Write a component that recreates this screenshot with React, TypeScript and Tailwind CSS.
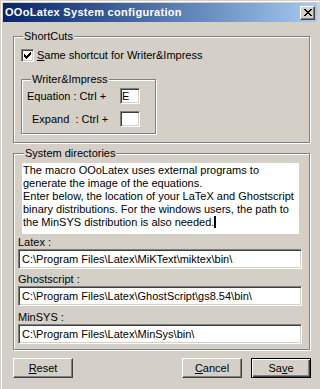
import React from "react";

const sunken =
  "bg-white border border-t-[#808080] border-l-[#808080] border-b-white border-r-white shadow-[inset_1px_1px_0_#404040,inset_-1px_-1px_0_#d4d0c8]";
const raised =
  "border border-t-white border-l-white border-b-[#404040] border-r-[#404040] shadow-[inset_-1px_-1px_0_#808080]";
const raisedDefault =
  "border border-black shadow-[inset_1px_1px_0_#fff,inset_-1px_-1px_0_#404040,inset_-2px_-2px_0_#808080]";
const group =
  "relative border border-[#808080] shadow-[inset_1px_1px_0_#fff,1px_1px_0_#fff]";
const legend =
  "absolute top-[-7px] bg-[#d4d0c8] px-[1px] leading-[13px] whitespace-nowrap";

function CloseGlyph() {
  const rows: [number, number][][] = [
    [[0, 2], [6, 2]],
    [[1, 2], [5, 2]],
    [[2, 4]],
    [[3, 2]],
    [[2, 4]],
    [[1, 2], [5, 2]],
    [[0, 2], [6, 2]],
  ];
  return (
    <svg width="8" height="7" viewBox="0 0 8 7" shapeRendering="crispEdges">
      {rows.map((r, y) =>
        r.map(([x, w], i) => <rect key={`${y}-${i}`} x={x} y={y} width={w} height={1} fill="#000" />)
      )}
    </svg>
  );
}

function Check() {
  return (
    <svg width="9" height="9" viewBox="0 0 9 9" shapeRendering="crispEdges">
      <rect x="7" y="1" width="1" height="1" fill="#000" />
      <rect x="6" y="2" width="2" height="1" fill="#000" />
      <rect x="1" y="3" width="1" height="1" fill="#000" />
      <rect x="5" y="3" width="3" height="1" fill="#000" />
      <rect x="1" y="4" width="2" height="1" fill="#000" />
      <rect x="4" y="4" width="3" height="1" fill="#000" />
      <rect x="1" y="5" width="5" height="1" fill="#000" />
      <rect x="2" y="6" width="3" height="1" fill="#000" />
      <rect x="3" y="7" width="1" height="1" fill="#000" />
    </svg>
  );
}

function PathField({ label, value, h }: { label: string; value: string; h: string }) {
  return (
    <>
      <div className={`${h} ml-[4px] flex items-end leading-[13px]`}>{label}</div>
      <div className={`${sunken} ml-[4px] w-[284px] h-[20px] flex items-center pl-[3px] whitespace-nowrap`}>
        {value}
      </div>
    </>
  );
}

export default function App() {
  return (
    <div className="w-[320px] h-[389px] overflow-hidden bg-[#d4d0c8] pt-[3px] pl-[3px] pr-[3px] shadow-[inset_1px_1px_0_#d4d0c8,inset_2px_2px_0_#fff] font-['Liberation_Sans',Arial,sans-serif] text-[11px] text-black">
      {/* Title bar */}
      <div className="h-[19px] flex items-center justify-between bg-linear-to-r from-[#0a246a] to-[#a6caf0] pl-[2px] pr-[2px]">
        <span className="text-white font-bold tracking-[0.3px] leading-[13px] whitespace-nowrap">
          OOoLatex System configuration
        </span>
        <div className={`w-[15px] h-[14px] bg-[#d4d0c8] ${raised} flex items-center justify-center`}>
          <CloseGlyph />
        </div>
      </div>

      <div className="pl-[10px]">
        {/* ShortCuts */}
        <div className={`${group} mt-[14px] w-[297px] h-[107px]`}>
          <span className={`${legend} left-[9px]`}>ShortCuts</span>
          <div className="mt-[12px] ml-[7px] flex items-center">
            <div className={`${sunken} w-[13px] h-[13px] flex items-start justify-start pl-[1px] pt-[1px]`}>
              <Check />
            </div>
            <span className="ml-[3px] leading-[13px]">
              <span className="underline">S</span>ame shortcut for Writer&amp;Impress
            </span>
          </div>
          <div className={`${group} mt-[17px] ml-[7px] w-[135px] h-[55px]`}>
            <span className={`${legend} left-[9px]`}>Writer&amp;Impress</span>
            <div className="mt-[8px] pl-[5px] flex items-center">
              <span className="w-[93px] whitespace-pre leading-[13px]">Equation : Ctrl +</span>
              <div className={`${sunken} w-[20px] h-[16px] flex items-center pl-[1px] leading-[13px]`}>E</div>
            </div>
            <div className="mt-[7px] pl-[10px] flex items-center">
              <span className="w-[88px] whitespace-pre leading-[13px]">Expand  : Ctrl +</span>
              <div className={`${sunken} w-[20px] h-[16px]`} />
            </div>
          </div>
        </div>

        {/* System directories */}
        <div className={`${group} mt-[10px] w-[297px] h-[197px]`}>
          <span className={`${legend} left-[10px]`}>System directories</span>
          <div className="mt-[9px] ml-[8px] w-[277px] h-[71px] bg-white pl-[1px] pt-[1px] leading-[13px] whitespace-nowrap">
            <div>The macro OOoLatex uses external programs to</div>
            <div>generate the image of the equations.</div>
            <div>Enter below, the location of your LaTeX and Ghostscript</div>
            <div>binary distributions. For the windows users, the path to</div>
            <div>
              the MinSYS distribution is also needed.
              <span className="inline-block w-[2px] h-[12px] bg-black align-[-2px]" />
            </div>
          </div>
          <PathField label="Latex :" value="C:\Program Files\Latex\MiKText\miktex\bin\" h="h-[15px]" />
          <PathField label="Ghostscript :" value="C:\Program Files\Latex\GhostScript\gs8.54\bin\" h="h-[17px]" />
          <PathField label="MinSYS :" value="C:\Program Files\Latex\MinSys\bin\" h="h-[18px]" />
        </div>

        {/* Buttons */}
        <div className="mt-[8px] w-[298px] flex items-center">
          <div className={`${raised} w-[60px] h-[20px] flex items-center justify-center`}>
            <span>
              <span className="underline">R</span>eset
            </span>
          </div>
          <div className="flex-1" />
          <div className={`${raised} w-[60px] h-[20px] flex items-center justify-center`}>
            <span>
              <span className="underline">C</span>ancel
            </span>
          </div>
          <div className={`${raisedDefault} ml-[9px] w-[60px] h-[20px] flex items-center justify-center`}>
            <span>
              Sa<span className="underline">v</span>e
            </span>
          </div>
        </div>
      </div>
    </div>
  );
}
